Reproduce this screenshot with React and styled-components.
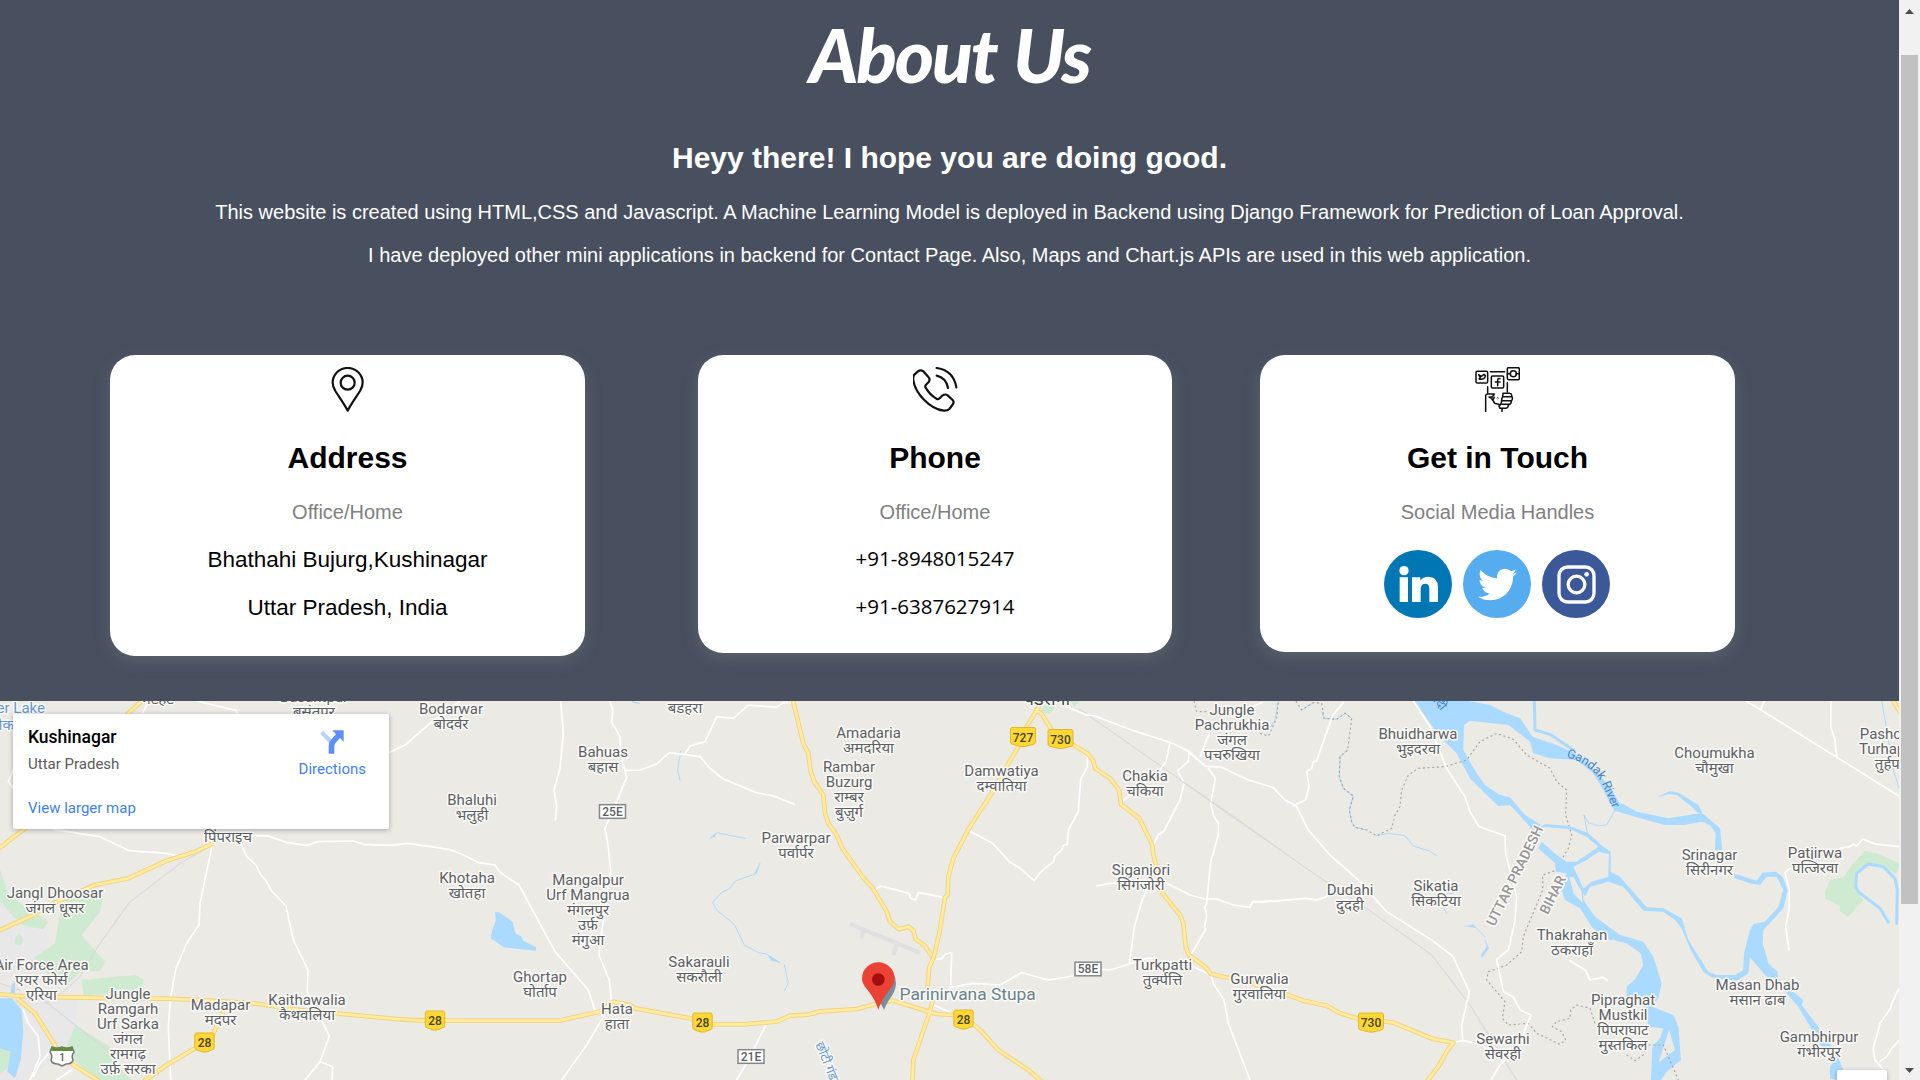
import React from "react";
import styled, { createGlobalStyle } from "styled-components";
import { FaTwitter } from "react-icons/fa";

const GlobalStyle = createGlobalStyle`
  html, body { margin: 0; padding: 0; overflow: hidden; }
  body { font-family: "Liberation Sans", Arial, sans-serif; }
`;

const Screen = styled.div`
  display: flex;
  width: 1920px;
  height: 1080px;
  overflow: hidden;
  background: #fff;
`;

const Page = styled.main`
  width: 1899px;
  height: 1080px;
  display: flex;
  flex-direction: column;
`;

const About = styled.section`
  box-sizing: border-box;
  height: 701px;
  flex: none;
  background: #484f5f;
  color: #fff;
  text-align: center;
`;

const Title = styled.h1`
  margin: 0;
  height: 141px;
  box-sizing: border-box;
  padding-top: 9px;
  font: italic 900 75px/90px Lato, sans-serif;
  letter-spacing: -2.2px;
  word-spacing: 3px;
`;

const Greeting = styled.h2`
  margin: 0 0 26px;
  font-size: 30px;
  line-height: 34px;
`;

const Intro = styled.p`
  margin: 0 0 20px;
  font-size: 20px;
  line-height: 23px;
`;

const Cards = styled.div`
  display: flex;
  align-items: flex-start;
  padding: 68px 0 0 110px;
`;

const Card = styled.article`
  box-sizing: border-box;
  flex: none;
  width: ${(p) => p.$width}px;
  height: ${(p) => p.$height}px;
  margin-right: ${(p) => p.$gap}px;
  padding-top: 12px;
  border-radius: 25px;
  background: #fff;
  color: #000;
  box-shadow: 0 5px 16px rgba(128, 140, 140, 0.32);
  display: flex;
  flex-direction: column;
  align-items: center;
`;

const CardIcon = styled.svg`
  width: 45px;
  height: 45px;
  flex: none;
  fill: none;
  stroke: #111;
  stroke-width: ${(p) => p.$stroke || 6.6};
  stroke-linecap: round;
  stroke-linejoin: round;
`;

const CardTitle = styled.h2`
  margin: 29px 0 26px;
  font-size: 30px;
  line-height: 34px;
`;

const CardHint = styled.p`
  margin: 0 0 23px;
  font-size: 20px;
  line-height: 23px;
  color: #808080;
`;

const CardLine = styled.p`
  margin: 0 0 22px;
  font-size: 22.5px;
  line-height: 26px;
`;

const PhoneLine = styled(CardLine)`
  margin: 0;
  height: 48px;
  font-family: "Open Sans", sans-serif;
  font-size: 20.5px;
  line-height: 22px;
`;

const Socials = styled.div`
  display: flex;
  gap: 11px;
  margin: 3px 1px 0 0;
`;

const Social = styled.a`
  width: 68px;
  height: 68px;
  border-radius: 50%;
  background: ${(p) => p.$color};
  color: #fff;
  display: flex;
  align-items: center;
  justify-content: center;
`;

const MapFrame = styled.section`
  position: relative;
  height: 379px;
  overflow: hidden;
  font-family: Roboto, "Noto Sans", sans-serif;
`;

const MapCanvas = styled.svg`
  display: block;
  width: 1899px;
  height: 379px;
  background: #ebeae5;
`;

const PlaceCard = styled.div`
  position: absolute;
  left: 13px;
  top: 13px;
  width: 376px;
  height: 115px;
  box-sizing: border-box;
  padding: 12px 23px 0 15px;
  background: #fff;
  border-radius: 2px;
  box-shadow: 0 1px 5px rgba(0, 0, 0, 0.3);
  display: flex;
  justify-content: space-between;
`;

const PlaceInfo = styled.div`
  display: flex;
  flex-direction: column;
`;

const PlaceName = styled.div`
  font-size: 17.5px;
  font-weight: 500;
  line-height: 22px;
  color: #000;
`;

const PlaceRegion = styled.div`
  margin-top: 6px;
  font-size: 15px;
  line-height: 20px;
  color: #5b5b5b;
`;

const MapLink = styled.a`
  font-size: 15px;
  line-height: 20px;
  color: #427fed;
  margin-top: ${(p) => p.$top}px;
`;

const Directions = styled.div`
  display: flex;
  flex-direction: column;
  align-items: center;
  padding-top: 3px;
`;

const MapButton = styled.div`
  position: absolute;
  left: 1837px;
  top: 369px;
  width: 50px;
  height: 50px;
  border-radius: 2px;
  background: #fff;
  box-shadow: 0 1px 4px rgba(0, 0, 0, 0.3);
`;

const Scrollbar = styled.aside`
  width: 21px;
  height: 1080px;
  box-sizing: border-box;
  padding: 9px 2px 7px;
  background: #f1f1f1;
  display: flex;
  flex-direction: column;
  align-items: center;
`;

const Thumb = styled.div`
  width: 17px;
  height: 849px;
  margin: 41px 0 auto;
  background: #c1c1c1;
`;

const Arrow = styled.svg`
  width: 9px;
  height: 5px;
  flex: none;
  fill: #4d4d4d;
`;

/* Each region keeps its geometry in thirds of a pixel, from its own origin. */
const REGIONS = [
  {
    x: 0,
    urban: "M0 540L60 640L150 740L110 850L0 870Z M30 925H240L200 1080L80 1170H0V930Z",
    green:
      "M185 640L240 610L310 625L300 665L245 735L270 765L315 815L300 842L240 845L200 885L150 860L100 805L165 760L175 700Z M245 870L405 855L430 868V900L380 910L250 915Z M225 1005L330 1070L345 1120L395 1170H290L195 1085Z M0 540L10 570L25 610L75 650L145 695L130 718L75 708L40 680L0 630Z M45 745L58 728L70 750L62 768L45 762Z M0 1075L35 1085L30 1130L0 1150Z",
    water: "M0 925H35L65 960L70 1020L62 1110L45 1165L22 1145L32 1085L0 1075Z M35 885L45 875V910H32Z",
    rail: "M620 475L540 520L388 638L300 760L240 860L190 905L140 940M130 930L340 1095M0 880L60 900",
    white:
      "M160 418L300 440L388 482L500 490L530 497M720 455L740 500L768 525L782 555L797 570L815 603L858 648L880 750L924 840L922 905L988 1038L960 1115L915 1170M960 1115L998 1130L996 1170M637 465L600 640L597 705L560 760L528 835L512 920L505 1010L512 1170M740 437H800L860 457L918 467L955 455L1060 453L1090 463L1170 466L1225 460L1345 478L1385 492L1440 520M1165 188L1215 165L1290 100L1380 33M590 33L710 62V75M440 45L425 75M40 240L25 275L40 295M70 960L85 1000L115 1040L120 1100L90 1170M150 1085L120 1120L100 1160M215 1140L170 1170",
    yellow:
      "M-10 725L100 675L150 645L285 585L385 565L500 512L585 485L640 460M-10 480L75 415L380 75L430 28M-10 912L60 918L200 922L500 926L600 930L760 940L900 960L1220 990H1290M50 925L105 970L170 1075L220 1125L300 1175M670 965L640 1030L585 1075L500 1125L430 1175",
  },
  {
    x: 400,
    water:
      "M285 665L297 667L338 695L342 715L348 732L363 738L370 752L408 772V782L312 772L272 745Q272 730 288 690Z M1100 792L1140 818L1115 812Z M930 445L950 428L945 440Z M1063 553L1080 520L1072 548Z M697 33L718 42L700 38Z",
    streams:
      "M930 445L950 428L1035 445M1080 520L1063 553L1008 572L988 597L965 607L938 637L950 660L1003 703L1033 765L1075 788L1100 792L1140 818M1153 825L1165 878L1153 903M842 183L833 240L840 270M697 35L718 40",
    white:
      "M482 33L490 130L480 235L462 300L470 350L466 390M630 33L638 60L635 97L660 140L662 195L680 262L650 335L615 415L625 470L632 545L600 760L597 795L628 870L635 935M675 242L720 240L770 222L808 188L900 200L930 235L970 267L1070 308L1120 318L1183 343M855 192L870 168L915 155L950 80L1000 85L1045 45L1130 52L1150 38H1175M285 525L300 547L357 585L465 785L565 900L585 960M232 517L285 525M610 980L560 1065L485 1170M1100 1000L1045 1110L1010 1170",
    yellow:
      "M1178 28L1210 160L1225 190L1232 245L1243 275L1270 315L1275 370L1285 400L1310 435L1327 475L1395 570L1417 592L1460 665L1470 695L1497 718L1525 710L1540 722L1547 747L1575 768L1600 805M0 987L60 992H475L600 965L640 935L690 945L705 955L870 985L940 1003H1030L1130 995L1170 977L1225 974L1255 965L1370 957L1440 938",
  },
  {
    x: 800,
    green: "M730 45L765 50L750 72L722 65Z M810 33H838L823 50Z",
    runway: "M150 702L360 788M185 745L190 720M280 795L290 765",
    rail: "M835 55L1440 478",
    white:
      "M508 423L578 460L628 515L660 535L702 572L720 548L760 515L765 498L785 480L790 467L802 463L805 420L835 365L842 270L862 230V190M225 600L243 588L327 610L332 625L347 630L355 607L430 622M410 808L425 806L437 792L455 788L452 885M450 893L520 880L600 885L665 848L745 870L820 858M905 838L930 840L988 822L1040 805H1070M988 822L1003 710L1025 635L1040 600M890 588L930 580H960M1100 580L1170 615L1215 627H1250L1300 645L1350 652L1358 635L1385 637L1440 632M800 50L860 75L885 78L1000 122L1110 157L1165 182L1200 215M1110 157L1098 215L1075 245L965 335M1167 185L1165 215L1133 242L1152 280L1140 330L1092 423L1075 435L1060 465M1200 200L1240 100M1180 830L1233 855M1300 75L1385 38M1225 235L1246 265L1232 340L1240 375L1255 400V435L1232 515L1220 640L1215 650L1220 680L1213 712L1217 718L1175 790M1233 855L1240 880L1272 930L1285 1000L1350 1170M400 945L450 967",
    yellow:
      "M240 938L280 932L410 972L460 975L520 1003L545 1025L595 1080L685 1140L725 1175M722 40L680 110L655 170L600 265L578 305L505 418L460 505L445 560L443 615L435 622L418 730L400 805L388 830L382 900L397 935L388 970L340 1110L337 1175M712 62L725 72L755 120L820 165L862 190L880 212L885 235L930 265L957 300L963 343L1018 385L1057 465L1060 495L1075 550L1085 607L1140 675L1150 700L1157 770L1167 795L1215 830L1233 852L1290 865",
  },
  {
    x: 1180,
    water:
      "M705 33H865L930 45L980 70L1020 85L1058 140L1130 165L1175 185L1220 215L1290 290L1325 350L1305 365L1270 300L1240 250L1190 210L1110 205L1060 190L1050 155L985 105L870 92L852 105L850 180L890 250L915 285L960 315L990 322L1035 375L1080 403L1085 425L1070 435L1040 400L990 345L955 348L920 315L870 265L830 190L780 140L750 100Z M848 712L880 703L887 715L865 710Z M912 740L927 775L905 805L903 795L920 770Z",
    streams: "M880 705L915 740M590 437L625 430L675 437L700 468L745 482L770 497M365 60L400 38M425 65L432 85L470 88L495 70L515 85M503 180L480 200L478 260L490 295L520 318L508 360L515 395L525 412L560 420M295 33L285 90L262 125M785 645L800 670M780 610H820",
    river: "M1063 33L1065 120L1110 133L1180 180",
    rail: "M0 270L430 570L560 655L755 795L870 945L1010 1170",
    white:
      "M0 170L25 185L75 228L125 232L200 268L280 293L315 330L348 347L385 420L450 495L530 565L620 665L755 750L818 798L868 905L845 1005L848 1052L820 1058M848 1052L900 1062L960 1100M340 347L377 330L387 290L380 245L395 235L400 215L410 213L458 75L490 38M300 632L380 625L410 630L440 620M210 652L218 635L300 632M700 33L750 110L800 235L855 320L870 365L897 410L975 437L977 490L1010 620L1005 690L990 760L985 780L950 808L970 905L1000 920L1020 960L1053 975L1010 1080L960 1125L930 1175",
    yellow:
      "M150 865L200 872L240 890L325 915L370 932L440 947L480 970L530 985L640 998L760 1047L820 1058L800 1085L775 1130L740 1175",
    border:
      "M348 33L365 60L400 38L425 40L432 85L470 88L495 70L515 85L503 180L480 200L478 260L490 295L520 318L508 360L515 395L525 412L560 420L590 437L635 415L645 375L660 350L665 300L685 255L715 235L795 230L860 210L900 155L950 130L1000 148L1040 195L1110 235L1130 275L1160 300L1157 375L1175 435L1165 475L1150 500L1130 540L1088 555V600L1030 740L1025 785L980 825L925 845L920 870L950 905L975 935L967 985L985 1005L1045 1000L1070 1030L1140 1063L1157 1050L1145 1025L1117 1010L1130 995L1170 985L1172 960L1190 945L1230 955L1245 1000M42 33L50 65H85M240 130L265 138L290 85L295 33",
  },
  {
    x: 1520,
    green:
      "M1035 483L1070 490L1140 520L1130 552L1090 530L1050 520L1010 550L1005 590L1030 630L985 680L960 665V650L915 625V605L930 570L970 562L1000 520Z",
    water:
      "M285 362L305 340L350 365L445 385L525 372L550 372L600 415L607 480H585L587 430L570 405L545 395L490 405H435L345 380Z M410 322L450 303L475 308L535 345L550 375L535 370L515 350L470 315L445 312Z M640 550L710 572L728 548L768 545L788 562L803 600L790 655L730 720L728 760L745 820L772 845L775 865L800 890L850 930L845 945L895 1010L905 1045L940 1070L970 1140L950 1170L930 1165V1130L945 1110L900 1065L870 1010L835 950L800 910L770 865L740 860L690 802L685 850L650 872L575 862L550 845L510 775L485 715L465 690L430 665L370 662L310 590L265 575L210 590L195 620L185 600L215 575L265 560L267 492L235 485L200 510L160 530L190 595V630L225 680L300 735L370 755L400 800L425 880L415 925L395 950L460 975L475 1010L483 1110L440 1145L420 1175L393 1170L397 1070L420 1045L430 1015L385 1010L370 930L320 925V890L345 868L370 825L362 790L320 760L250 745L215 710L180 655L135 630L125 600L140 550L108 545L105 520L55 475L65 455L110 495L140 515L170 515L235 470L200 440L150 418L80 411L55 415L75 402L150 408L205 430L250 470L272 485V545L300 560L380 652L430 655L485 685L505 750L565 845L590 855H645L670 840L672 790L690 720L700 702L735 695L775 650L790 600L770 560L740 560L720 585L690 580L645 565Z",
    land: "M447 1020L465 1080L415 1118Z M148 560L160 560L185 605L187 638L160 610Z M275 745L318 770L290 762Z",
    river: "M1105 697L1080 655L1015 605L1007 590L1010 550L1045 522L1090 530L1125 565L1132 600L1130 700",
    streams: "M203 435L192 375L205 398L235 408L260 405L285 360M1085 33L1097 100L1120 240L1137 295M45 400V420",
    white:
      "M680 35L720 58L1140 320M722 58L733 33M933 33L932 110L945 150L950 200M960 475L990 470L1000 463L1010 468L1028 447L1065 462L1140 470M810 535L795 548L808 600L807 660L797 710L807 780M150 812L195 840L210 870L250 862L262 872M1140 890L1115 940L1112 955L1080 1000L1060 1075L1065 1110L1090 1140M1080 1115L1100 1100L1115 1075L1140 1050",
    yellow: "M1117 28L1145 75",
    border: "M320 1095L345 1112L370 1095L380 1065H430L475 1170",
  },
];

const LABELS = [
  [314, 702, ["Basantpur", "बसंतपुर"]],
  [157, 704, ["भटहट"]],
  [228, 842, ["पिंपराइच"]],
  [55, 898, ["Jangl Dhoosar", "जंगल धूसर"]],
  [41.5, 969.5, ["Air Force Area", "एयर फोर्स", "एरिया"]],
  [128, 999, ["Jungle", "Ramgarh", "Urf Sarka", "जंगल", "रामगढ़", "उर्फ़ सरका"]],
  [220.5, 1010, ["Madapar", "मदपर"]],
  [307, 1005, ["Kaithawalia", "कैथवलिया"]],
  [451, 714, ["Bodarwar", "बोदर्वर"]],
  [685, 713, ["बडहरा"]],
  [603, 757, ["Bahuas", "बहास"]],
  [472, 805, ["Bhaluhi", "भलुही"]],
  [467, 883, ["Khotaha", "खोतहा"]],
  [588, 884.5, ["Mangalpur", "Urf Mangrua", "मंगलपुर", "उर्फ़", "मंगुआ"]],
  [540, 981.5, ["Ghortap", "घोर्ताप"]],
  [617, 1013.5, ["Hata", "हाता"]],
  [699, 967, ["Sakarauli", "सकरौली"]],
  [796, 843, ["Parwarpar", "पर्वार्पर"]],
  [868.5, 738, ["Amadaria", "अमदरिया"]],
  [849, 771.5, ["Rambar", "Buzurg", "राम्बर", "बुज़ुर्ग"]],
  [1001.5, 775.5, ["Damwatiya", "दम्वातिया"]],
  [1145, 781, ["Chakia", "चकिया"]],
  [1141, 875, ["Siganjori", "सिगंजोरी"]],
  [1162.5, 969.5, ["Turkpatti", "तुर्क्पत्ति"]],
  [1232, 714.5, ["Jungle", "Pachrukhia", "जंगल", "पचरुखिया"]],
  [1418, 739, ["Bhuidharwa", "भुइदरवा"]],
  [1350, 894.5, ["Dudahi", "दुदही"]],
  [1436, 890.5, ["Sikatia", "सिकटिया"]],
  [1259.5, 984, ["Gurwalia", "गुरवालिया"]],
  [1503, 1043.5, ["Sewarhi", "सेवरही"]],
  [1714.5, 758, ["Choumukha", "चौमुखा"]],
  [1893, 739, ["Pashchim", "Turhapatti", "तुर्हपट्टी"]],
  [1709.5, 860, ["Srinagar", "सिरीनगर"]],
  [1815, 857.5, ["Patjirwa", "पत्जिरवा"]],
  [1572, 940, ["Thakrahan", "ठकराहाँ"]],
  [1757.5, 990, ["Masan Dhab", "मसान ढाब"]],
  [1623, 1005, ["Pipraghat", "Mustkil", "पिपराघाट", "मुस्तकिल"]],
  [1819, 1041.5, ["Gambhirpur", "गंभीरपुर"]],
];

const SHIELDS = [
  [435, 1020.5, "28"], [204.5, 1042.5, "28"], [702.5, 1022.5, "28"], [963.5, 1019.5, "28"],
  [1023, 737, "727"], [1060.5, 739, "730"], [1371, 1022.5, "730"],
];
const BOXES = [[612.5, 811.5, "25E"], [751, 1056.5, "21E"], [1088, 969, "58E"]];

const Label = styled.text`
  font-family: Roboto, "Noto Sans", "Noto Sans Devanagari", sans-serif;
  font-size: ${(p) => p.$size || 15}px;
  font-weight: ${(p) => p.$weight || 400};
  fill: ${(p) => p.$color || "#5b5f65"};
  stroke: ${(p) => (p.$bare ? "none" : "#fbfaf7")};
  stroke-width: 3px;
  stroke-linejoin: round;
  paint-order: stroke;
  text-anchor: ${(p) => p.$anchor || "middle"};
`;

function Region({ r }) {
  return (
    <g transform={`translate(${r.x} 690) scale(0.33333)`} fill="none" strokeLinejoin="round" strokeLinecap="round">
      {r.urban && <path d={r.urban} fill="#e8e8e8" />}
      {r.green && <path d={r.green} fill="#ceead0" />}
      {r.water && <path d={r.water} fill="#aadaff" />}
      {r.land && <path d={r.land} fill="#ebeae5" />}
      {r.river && <path d={r.river} stroke="#aadaff" strokeWidth="9" />}
      {r.streams && <path d={r.streams} stroke="#aadaff" strokeWidth="3" />}
      {r.runway && <path d={r.runway} stroke="#e0e0e0" strokeWidth="13" strokeLinecap="butt" />}
      {r.rail && <path d={r.rail} stroke="#d8d9da" strokeWidth="3.2" />}
      {r.border && <path d={r.border} stroke="#a3a3a1" strokeWidth="3.5" strokeDasharray="6 8" strokeLinecap="butt" />}
      {r.white && <path d={r.white} stroke="#fff" strokeWidth="5" />}
    </g>
  );
}

function RegionHighways({ r }) {
  return (
    <g transform={`translate(${r.x} 690) scale(0.33333)`} fill="none" strokeLinejoin="round">
      <path d={r.yellow} stroke="#f4d37c" strokeWidth="14" />
      <path d={r.yellow} stroke="#ffeba1" strokeWidth="8" />
    </g>
  );
}

function Shield({ x, y, text }) {
  const w = text.length > 2 ? 12.5 : 9.7;
  return (
    <g transform={`translate(${x} ${y})`}>
      <path
        d={`M${-w + 1} -9.5H${w - 1}L${w} -8V5Q${w} 7 ${w - 2} 7.3L2 9.5H-2L${-w + 2} 7.3Q${-w} 7 ${-w} 5V-8Z`}
        fill="#fdd835" stroke="#e2b72c" strokeWidth="1"
      />
      <Label $size={12} $weight={500} $color="#4a4220" $bare y="4.6">{text}</Label>
    </g>
  );
}

function TownMap() {
  return (
    <MapCanvas viewBox="0 701 1899 379">
      {REGIONS.map((r) => <Region key={r.x} r={r} />)}
      {REGIONS.map((r) => <RegionHighways key={r.x} r={r} />)}
      {BOXES.map(([x, y, t]) => (
        <g key={t} transform={`translate(${x} ${y})`}>
          <rect x="-13" y="-6.8" width="26" height="13.6" fill="#fff" stroke="#85878a" strokeWidth="1.5" />
          <Label $size={12} $weight={500} $bare y="4.4">{t}</Label>
        </g>
      ))}
      {SHIELDS.map(([x, y, t]) => <Shield key={`${x}`} x={x} y={y} text={t} />)}
      <g transform="translate(62 1056)">
        <path d="M-10 -9Q-5 -7 0 -9Q5 -7 10 -9L12 -4Q9 0 11 4Q10 8 4 8L0 10L-4 8Q-10 8 -11 4Q-9 0 -12 -4Z" fill="#fff" stroke="#75787b" strokeWidth="1.5" />
        <path d="M-10 -9Q-5 -7 0 -9Q5 -7 10 -9L11 -5H-11Z" fill="#5f8f3e" />
        <Label $size={11} $weight={500} $bare y="5">1</Label>
      </g>
      {LABELS.map(([x, y, lines]) => (
        <Label key={`${x}-${y}`} y={y}>
          {lines.map((line, i) => <tspan key={i} x={x} y={y + i * 15}>{line}</tspan>)}
        </Label>
      ))}
      <Label x="1047" y="705" $size={18} $color="#3c4043">पडरौना</Label>
      <Label x="45" y="712.5" $anchor="end" $color="#6497d6">er Lake</Label>
      <Label x="14" y="730" $anchor="end" $color="#6497d6">लेक</Label>
      <Label $size={14} $weight={500} $color="#959595" transform="translate(1519 878) rotate(-63.4)">UTTAR PRADESH</Label>
      <Label $size={14} $weight={500} $color="#959595" transform="translate(1557 897) rotate(-63.4)">BIHAR</Label>
      <path id="gandak" d="M1566 757Q1592 764 1602 784L1614 812" fill="none" />
      <Label $size={12.5} $bare $anchor="start" $color="#4a84cf"><textPath href="#gandak">Gandak River</textPath></Label>
      <Label $size={12.5} $bare $anchor="end" $color="#4a84cf" transform="translate(1441 711) rotate(50)">नदी</Label>
      <Label $size={13} $anchor="start" $color="#6497d6" transform="translate(815 1044) rotate(68)">छोटी गंडक</Label>
      <g transform="translate(0 1)">
        <path d="M884 1009C879 998 873 990 873 980Q874 967 885 966Q896 970 896 983C895 994 888 998 884 1009Z" fill="#78909c" />
        <path d="M878.3 1009C876 1000 872 995 866 987Q862 982 862 977.5A16.3 16.3 0 0 1 894.6 977.5Q894.6 982 891 987C885 995 881 1000 878.3 1009Z" fill="#ea4335" />
        <circle cx="878.3" cy="978.5" r="6.3" fill="#a50e0e" />
      </g>
      <Label x="899.5" y="1000.3" $size={17.4} $anchor="start" $color="#68828e">Parinirvana Stupa</Label>
    </MapCanvas>
  );
}

const PinIcon = () => (
  <CardIcon viewBox="705 81 135 135">
    <path d="M773 212C765 196 750 175 736 153Q728 139 728 128A45 44 0 0 1 818 128Q818 139 810 153C796 175 781 196 773 212Z" />
    <circle cx="773" cy="128" r="21" />
  </CardIcon>
);

const PhoneIcon = () => (
  <CardIcon viewBox="698 81 135 135">
    <path d="M703 103L713 94Q721 88 729 94L744 111Q751 118 745 126L737 134Q733 138 736 143Q748 164 768 176Q774 179 778 175L787 166Q795 161 802 166L817 180Q823 187 816 195L808 206Q801 213 790 212C748 207 705 160 699 121Q697 110 703 103Z" />
    <path d="M769 84Q820 92 828 142M769 107Q797 113 803 144" />
  </CardIcon>
);

const HandsIcon = () => (
  <CardIcon viewBox="705 81 135 135" $stroke={4.6}>
    <rect x="708" y="94" width="35" height="35" rx="4" />
    <rect x="754" y="108" width="37" height="36" rx="4" />
    <rect x="802" y="83" width="36" height="36" rx="4" />
    <path d="M751 95H794M743 140V159M802 128V156" />
    <path d="M780 116Q773 113 773 121V137M766 126H780" />
    <circle cx="820" cy="101" r="9" />
    <path d="M802 101H811M829 101H838" />
    <path d="M716 104L724 109L732 103L736 107Q735 120 717 117L721 113Z" />
    <path d="M737 216V166Q738 162 744 162H763L757 171H747Q757 174 764 190L781 194M763 172L758 181" />
    <path d="M789 160H809Q816 161 815 168Q820 177 814 183Q814 193 806 194Q804 204 798 205H780L777 198Q784 194 785 183Q784 176 788 171ZM789 170H813M787 182H813M785 193H806M786 206V216" />
    <circle cx="773" cy="175" r="0.6" />
  </CardIcon>
);

const LinkedInMark = () => (
  <svg width="39" height="36" viewBox="0 0 117 108" fill="#fff">
    <circle cx="15" cy="14" r="14" />
    <path d="M2 34H27V108H2ZM39 34H64V44Q72 32 88 32Q117 32 117 64V108H91V69Q91 53 79 53Q65 53 65 70V108H39Z" />
  </svg>
);

const InstagramMark = () => (
  <svg width="39" height="39" viewBox="0 0 117 117" fill="none" stroke="#fff" strokeWidth="10">
    <rect x="6" y="6" width="105" height="105" rx="26" />
    <circle cx="58.5" cy="58.5" r="25" />
    <circle cx="89" cy="28" r="7" fill="#fff" stroke="none" />
  </svg>
);

export default function App() {
  return (
    <>
      <GlobalStyle />
      <Screen>
        <Page>
          <About>
            <Title>About Us</Title>
            <Greeting>Heyy there! I hope you are doing good.</Greeting>
            <Intro>
              This website is created using HTML,CSS and Javascript. A Machine Learning Model is deployed in Backend
              using Django Framework for Prediction of Loan Approval.
            </Intro>
            <Intro>
              I have deployed other mini applications in backend for Contact Page. Also, Maps and Chart.js APIs are used
              in this web application.
            </Intro>
            <Cards>
              <Card $width={475} $height={301} $gap={113}>
                <PinIcon />
                <CardTitle>Address</CardTitle>
                <CardHint>Office/Home</CardHint>
                <CardLine>Bhathahi Bujurg,Kushinagar</CardLine>
                <CardLine>Uttar Pradesh, India</CardLine>
              </Card>
              <Card $width={474} $height={298} $gap={88}>
                <PhoneIcon />
                <CardTitle>Phone</CardTitle>
                <CardHint>Office/Home</CardHint>
                <PhoneLine>+91-8948015247</PhoneLine>
                <PhoneLine>+91-6387627914</PhoneLine>
              </Card>
              <Card $width={475} $height={297} $gap={0}>
                <HandsIcon />
                <CardTitle>Get in Touch</CardTitle>
                <CardHint>Social Media Handles</CardHint>
                <Socials>
                  <Social $color="#0077b5"><LinkedInMark /></Social>
                  <Social $color="#55acee"><FaTwitter size={39} /></Social>
                  <Social $color="#3b5998"><InstagramMark /></Social>
                </Socials>
              </Card>
            </Cards>
          </About>
          <MapFrame>
            <TownMap />
            <PlaceCard>
              <PlaceInfo>
                <PlaceName>Kushinagar</PlaceName>
                <PlaceRegion>Uttar Pradesh</PlaceRegion>
                <MapLink $top={24}>View larger map</MapLink>
              </PlaceInfo>
              <Directions>
                <svg width="26" height="26" viewBox="0 0 78 78">
                  <path d="M4 14L12 5L39 32L30 42Z" fill="#b9d0fd" />
                  <path d="M40 4H74V38L63 27L52 39Q46 44 46 52V74H29V50Q29 38 38 30L51 16Z" fill="#5e8ff7" />
                </svg>
                <MapLink $top={4}>Directions</MapLink>
              </Directions>
            </PlaceCard>
            <MapButton />
          </MapFrame>
        </Page>
        <Scrollbar>
          <Arrow viewBox="0 0 9 5"><path d="M4.5 0L9 5H0Z" /></Arrow>
          <Thumb />
          <Arrow viewBox="0 0 9 5"><path d="M0 0H9L4.5 5Z" /></Arrow>
        </Scrollbar>
      </Screen>
    </>
  );
}
